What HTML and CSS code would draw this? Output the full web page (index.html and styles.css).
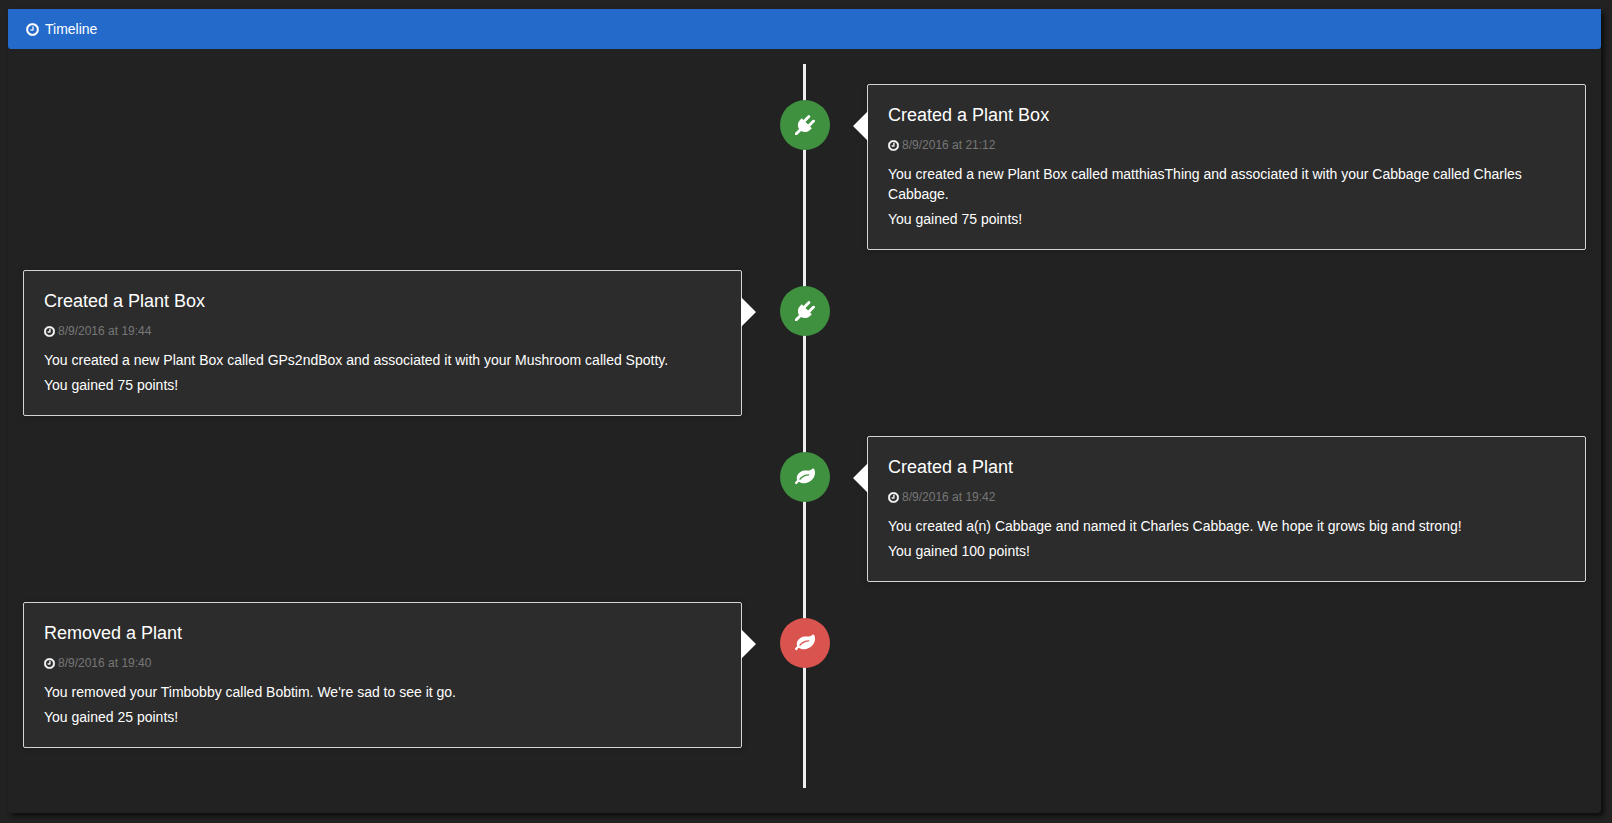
FILE: index.html
```
<!DOCTYPE html>
<html lang="en">
<head>
<meta charset="utf-8">
<meta name="viewport" content="width=device-width, initial-scale=1">
<title>Timeline</title>
<link rel="stylesheet" href="styles.css">
</head>
<body>
<svg class="sprite" aria-hidden="true">
  <symbol id="clock" viewBox="96 96 1600 1600"><path d="M1024 544v448q0 14-9 23t-23 9h-320q-14 0-23-9t-9-23v-64q0-14 9-23t23-9h224v-352q0-14 9-23t23-9h64q14 0 23 9t9 23zm416 352q0-148-73-273t-198-198-273-73-273 73-198 198-73 273 73 273 198 198 273 73 273-73 198-198 73-273zm224 0q0 209-103 385.5t-279.5 279.5-385.5 103-385.5-103-279.5-279.5-103-385.5 103-385.5 279.5-279.5 385.5-103 385.5 103 279.5 279.5 103 385.5z"/></symbol>
  <symbol id="plug" viewBox="0 0 1792 1792"><path d="M1755 453q37 38 37 90.5t-37 90.5l-401 400 150 150-160 160q-163 163-389.5 186.5t-411.5-100.5l-362 362h-181v-181l362-362q-124-185-100.5-411.5t186.5-389.5l160-160 150 150 400-401q38-37 91-37t90 37 37 90.5-37 90.5l-400 401 234 234 401-400q38-37 91-37t90 37z"/></symbol>
  <symbol id="leaf" viewBox="0 0 1792 1792"><path d="M1280 704q0-26-19-45t-45-19q-172 0-318 49.5t-259.5 134-235.5 219.5q-19 21-19 45 0 26 19 45t45 19q24 0 45-19 27-24 74-71t67-66q137-124 268.5-176t313.5-52q26 0 45-19t19-45zm512-198q0 95-20 193-46 224-184.5 383t-357.5 268q-214 108-438 108-148 0-286-47-15-5-88-42t-96-37q-16 0-39.5 32t-45 70-52.5 70-60 32q-43 0-63.5-17.5t-45.5-59.5q-2-4-6-11t-5.5-10-3-9.5-1.5-13.5q0-35 31-73.5t68-65.5 68-56 31-48q0-4-14-38t-16-44q-9-51-9-104 0-115 43.5-220t119-184.5 170.5-139 204-95.5q55-18 145-25.5t179.5-9 178.5-6 163.5-24 113.5-56.5l29.5-29.5 29.5-28 27-20 36.5-16 43.5-4.5q39 0 70.5 46t47.5 112 24 124 8 96z"/></symbol>
</svg>
<main class="panel">
  <header class="panel-heading">
    <svg class="icon icon-heading" aria-hidden="true"><use href="#clock"/></svg>
    <h1 class="panel-title">Timeline</h1>
  </header>
  <div class="panel-body">
    <ul class="timeline">
      <li class="event event-right">
        <div class="badge badge-success"><svg class="icon icon-badge" aria-hidden="true"><use href="#plug"/></svg></div>
        <article class="card">
          <h2 class="card-title">Created a Plant Box</h2>
          <p class="card-date"><svg class="icon icon-date" aria-hidden="true"><use href="#clock"/></svg><time>8/9/2016 at 21:12</time></p>
          <p class="card-text">You created a new Plant Box called matthiasThing and associated it with your Cabbage called Charles Cabbage.</p>
          <p class="card-text">You gained 75 points!</p>
        </article>
      </li>
      <li class="event event-left">
        <div class="badge badge-success"><svg class="icon icon-badge" aria-hidden="true"><use href="#plug"/></svg></div>
        <article class="card">
          <h2 class="card-title">Created a Plant Box</h2>
          <p class="card-date"><svg class="icon icon-date" aria-hidden="true"><use href="#clock"/></svg><time>8/9/2016 at 19:44</time></p>
          <p class="card-text">You created a new Plant Box called GPs2ndBox and associated it with your Mushroom called Spotty.</p>
          <p class="card-text">You gained 75 points!</p>
        </article>
      </li>
      <li class="event event-right">
        <div class="badge badge-success"><svg class="icon icon-badge" aria-hidden="true"><use href="#leaf"/></svg></div>
        <article class="card">
          <h2 class="card-title">Created a Plant</h2>
          <p class="card-date"><svg class="icon icon-date" aria-hidden="true"><use href="#clock"/></svg><time>8/9/2016 at 19:42</time></p>
          <p class="card-text">You created a(n) Cabbage and named it Charles Cabbage. We hope it grows big and strong!</p>
          <p class="card-text">You gained 100 points!</p>
        </article>
      </li>
      <li class="event event-left">
        <div class="badge badge-danger"><svg class="icon icon-badge" aria-hidden="true"><use href="#leaf"/></svg></div>
        <article class="card">
          <h2 class="card-title">Removed a Plant</h2>
          <p class="card-date"><svg class="icon icon-date" aria-hidden="true"><use href="#clock"/></svg><time>8/9/2016 at 19:40</time></p>
          <p class="card-text">You removed your Timbobby called Bobtim. We're sad to see it go.</p>
          <p class="card-text">You gained 25 points!</p>
        </article>
      </li>
    </ul>
  </div>
</main>
</body>
</html>
```
FILE: styles.css
```
* {
  box-sizing: border-box;
}

body {
  margin: 0;
  padding: 9px 11px 10px 8px;
  background: #222;
  color: #fff;
  font: 14px/20px "Liberation Sans", Arial, sans-serif;
}

h1, h2, p, ul {
  margin: 0;
  padding: 0;
  font-weight: normal;
}

.sprite {
  display: none;
}

.icon {
  display: block;
  flex: none;
  fill: currentColor;
}

.icon-heading {
  width: 13px;
  height: 13px;
  stroke: currentColor;
  stroke-width: 30;
}

.icon-date {
  width: 11px;
  height: 11px;
  stroke: currentColor;
  stroke-width: 64;
}

.icon-badge {
  width: 20px;
  height: 20px;
}

.panel {
  border-radius: 4px;
  background: #222;
  box-shadow: 3px 3px 5px #0c0c0c;
}

.panel-heading {
  display: flex;
  align-items: center;
  gap: 6px;
  padding: 10px 18px;
  border-radius: 0 0 3px 3px;
  background: #246aca;
}

.panel-title {
  font-size: 14px;
}

.panel-body {
  padding: 15px 15px 25px;
}

.timeline {
  display: grid;
  gap: 20px;
  padding: 20px 0 40px;
  list-style: none;
  background: linear-gradient(#eee, #eee) center / 3px 100% no-repeat;
}

.event {
  display: grid;
  grid-template-columns: 46% 1fr 46%;
  align-items: start;
}

.badge {
  display: grid;
  place-items: center;
  grid-area: 1 / 2;
  justify-self: center;
  width: 50px;
  height: 50px;
  margin-top: 16px;
  border-radius: 50%;
}

.badge-success {
  background: #3f903f;
}

.badge-danger {
  background: #d9534f;
}

.card {
  position: relative;
  padding: 20px;
  border: 1px solid #d4d4d4;
  border-radius: 2px;
  background: #2c2c2c;
  box-shadow: 0 1px 6px rgba(0, 0, 0, 0.175);
}

.event-left .card {
  grid-area: 1 / 1;
}

.event-right .card {
  grid-area: 1 / 3;
}

.card::after {
  content: "";
  position: absolute;
  top: 26px;
  width: 15px;
  height: 30px;
  background: #fff;
}

.event-left .card::after {
  left: 100%;
  clip-path: polygon(0 0, 100% 50%, 0 100%);
}

.event-right .card::after {
  right: 100%;
  clip-path: polygon(100% 0, 0 50%, 100% 100%);
}

.card-title {
  font-size: 18px;
  line-height: 20px;
}

.card-date {
  display: flex;
  align-items: center;
  gap: 3px;
  margin: 10px 0 9px;
  font-size: 12px;
}

.card-date time {
  color: #777;
}

.card-text + .card-text {
  margin-top: 5px;
}
```
